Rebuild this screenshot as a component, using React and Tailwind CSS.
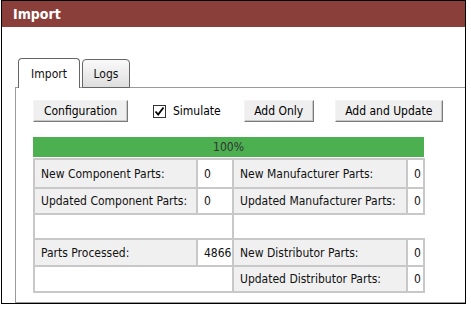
import React from "react";

const font = { fontFamily: "'DejaVu Sans Condensed', 'DejaVu Sans', sans-serif" };

function Btn({ className, children }) {
  return (
    <button
      className={`h-[22px] bg-[#efefef] border border-t-[#f4f4f4] border-l-[#f4f4f4] border-r-[#7a7a7a] border-b-[#7a7a7a] shadow-[inset_-1px_-1px_0_#c8c8c8] text-[12px] text-[#000] leading-none ${className}`}
    >
      {children}
    </button>
  );
}

const cell = "border-2 border-[#c8c8c8] px-[6px] text-[12px] text-[#111] whitespace-nowrap";
const label = `${cell} bg-[#f0f0f0]`;
const value = `${cell} bg-white`;

export default function App() {
  return (
    <div className="bg-white w-[471px] h-[309px] font-stretch-condensed" style={font}>
      <div className="ml-px w-[465px] h-[304px] border border-black flex flex-col overflow-hidden">
        {/* title bar */}
        <div className="h-[26px] bg-[#8b3f3a] text-white font-bold text-[14px] pl-[11px] flex items-center shrink-0">
          Import
        </div>

        <div className="flex-1 flex flex-col pl-[13px] pt-[31px]">
          {/* tabs */}
          <div className="flex items-end ml-[3px] gap-[2px] -mb-px relative z-10">
            <div className="w-[62px] h-[30px] bg-white border border-b-0 border-[#666] rounded-t-[4px] flex items-center justify-center text-[12px] text-[#111]">
              Import
            </div>
            <div className="w-[48px] h-[29px] bg-gradient-to-b from-[#fafafa] to-[#dedede] border border-[#666] rounded-t-[4px] flex items-center justify-center text-[12px] text-[#111]">
              Logs
            </div>
          </div>

          {/* panel */}
          <div className="flex-1 w-[470px] border-t border-l border-b border-[#9a9a9a] pl-[17px] pt-[12px]">
            <div className="flex items-center">
              <Btn className="w-[95px]">Configuration</Btn>
              <label className="ml-[25px] flex items-center gap-[7px] text-[12px] text-[#000]">
                <span className="w-[13px] h-[13px] border border-[#333] bg-white flex items-center justify-center">
                  <svg width="11" height="11" viewBox="0 0 11 11">
                    <path d="M1.5 5.5 L4.2 8.5 L9.5 1.5" fill="none" stroke="#000" strokeWidth="1.8" />
                  </svg>
                </span>
                Simulate
              </label>
              <Btn className="w-[70px] ml-[23px]">Add Only</Btn>
              <Btn className="w-[108px] ml-[21px]">Add and Update</Btn>
            </div>

            <div className="mt-[15px] w-[391px] h-[20px] bg-[#4caf50] flex items-center justify-center text-[12px] text-[#333]">
              100%
            </div>

            <table className="mt-[1px] border-collapse w-[390px] table-fixed">
              <colgroup>
                <col className="w-[163px]" />
                <col className="w-[36px]" />
                <col className="w-[174px]" />
                <col className="w-[17px]" />
              </colgroup>
              <tbody>
                <tr className="h-[29px]">
                  <td className={label}>New Component Parts:</td>
                  <td className={value}>0</td>
                  <td className={label}>New Manufacturer Parts:</td>
                  <td className={`${value} px-[3px]`}>0</td>
                </tr>
                <tr className="h-[26px]">
                  <td className={label}>Updated Component Parts:</td>
                  <td className={value}>0</td>
                  <td className={label}>Updated Manufacturer Parts:</td>
                  <td className={`${value} px-[3px]`}>0</td>
                </tr>
                <tr className="h-[25px]">
                  <td colSpan={2} className={value}></td>
                  <td colSpan={2} className="border-l-2 border-[#c8c8c8] bg-white"></td>
                </tr>
                <tr className="h-[27px]">
                  <td className={label}>Parts Processed:</td>
                  <td className={`${value} px-[4px]`}>4866</td>
                  <td className={label}>New Distributor Parts:</td>
                  <td className={`${value} px-[3px]`}>0</td>
                </tr>
                <tr className="h-[26px]">
                  <td colSpan={2} className={value}></td>
                  <td className={label}>Updated Distributor Parts:</td>
                  <td className={`${value} px-[3px]`}>0</td>
                </tr>
              </tbody>
            </table>
          </div>
        </div>
      </div>
    </div>
  );
}
